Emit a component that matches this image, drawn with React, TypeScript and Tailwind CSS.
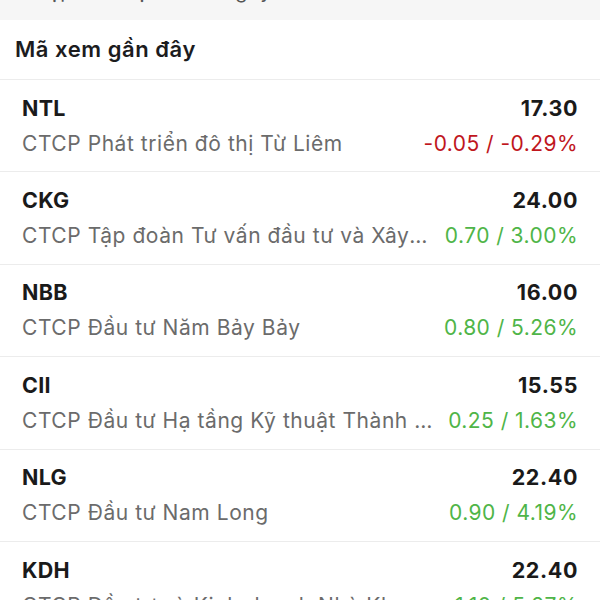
import React from "react";

type Quote = {
  code: string;
  name: string;
  price: string;
  change: string;
  up: boolean;
};

const quotes: Quote[] = [
  { code: "NTL", name: "CTCP Phát triển đô thị Từ Liêm", price: "17.30", change: "-0.05 / -0.29%", up: false },
  { code: "CKG", name: "CTCP Tập đoàn Tư vấn đầu tư và Xây dựng Kiên Giang", price: "24.00", change: "0.70 / 3.00%", up: true },
  { code: "NBB", name: "CTCP Đầu tư Năm Bảy Bảy", price: "16.00", change: "0.80 / 5.26%", up: true },
  { code: "CII", name: "CTCP Đầu tư Hạ tầng Kỹ thuật Thành phố Hồ Chí Minh", price: "15.55", change: "0.25 / 1.63%", up: true },
  { code: "NLG", name: "CTCP Đầu tư Nam Long", price: "22.40", change: "0.90 / 4.19%", up: true },
  { code: "KDH", name: "CTCP Đầu tư và Kinh doanh Nhà Khang Điền", price: "22.40", change: "1.10 / 5.27%", up: true },
];

const QuoteRow = ({ q }: { q: Quote }) => (
  <div className="flex h-[92.4px] shrink-0 flex-col justify-center border-b border-[#ececec] px-[22px]">
    <div className="flex items-center justify-between leading-[28px]">
      <span className="text-[21.5px] font-bold tracking-[0.3px] text-[#1a1a1a]">{q.code}</span>
      <span className="text-[21.5px] font-bold tracking-[0.6px] text-[#1a1a1a]">{q.price}</span>
    </div>
    <div className="mt-[8px] flex items-center gap-[15px] leading-[28px]">
      <span className="min-w-0 flex-1 truncate text-[21px] tracking-[0.55px] text-[#6b6b6b]">{q.name}</span>
      <span
        className={`shrink-0 text-[21px] tracking-[0.45px] ${q.up ? "text-[#4fb548]" : "text-[#c0161d]"}`}
      >
        {q.change}
      </span>
    </div>
  </div>
);

export default function App() {
  return (
    <div className="flex h-[600px] w-[600px] flex-col overflow-hidden bg-white font-['Inter','Liberation_Sans',sans-serif]">
      <div className="h-[20px] shrink-0 overflow-hidden bg-[#f6f6f6] px-[22px]">
        <p className="-mt-[23px] text-[20px] leading-[28px] text-[#555]">Nhập mã hoặc tên công ty</p>
      </div>
      <div className="flex h-[60px] shrink-0 items-center border-b border-[#ececec] px-[15px]">
        <h2 className="text-[22px] font-semibold tracking-[0.55px] text-[#1c1c1e]">Mã xem gần đây</h2>
      </div>
      {quotes.map((q) => (
        <QuoteRow key={q.code} q={q} />
      ))}
    </div>
  );
}
